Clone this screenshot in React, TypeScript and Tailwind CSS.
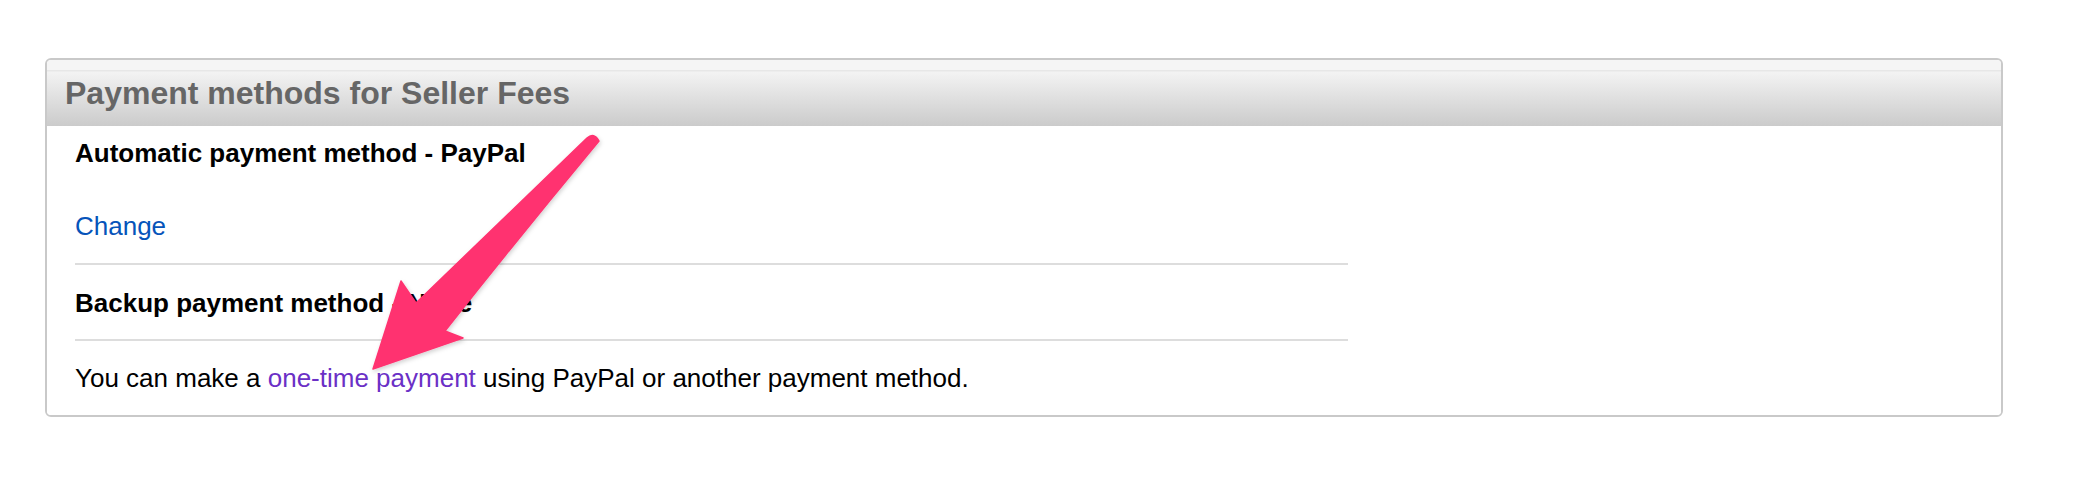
import React from "react";

const Arrow: React.FC = () => (
  <svg
    className="absolute left-0 top-0 pointer-events-none"
    width="2082"
    height="498"
    viewBox="0 0 2082 498"
  >
    <defs>
      <filter id="arrowShadow" x="-10%" y="-10%" width="120%" height="120%">
        <feDropShadow dx="1" dy="2" stdDeviation="2" floodColor="#000" floodOpacity="0.18" />
      </filter>
    </defs>
    <path
      d="M 587 138 Q 594 132 599 141 Q 520 236 445 331 L 463 338 L 373 369 L 401 281 L 416 303 Q 500 222 587 138 Z"
      fill="#ff3370"
      stroke="#ff3370"
      strokeWidth="1.5"
      strokeLinejoin="round"
      filter="url(#arrowShadow)"
    />
  </svg>
);

export default function App() {
  return (
    <div className="relative w-full h-[498px] bg-white pt-[58px] pl-[45px] font-['Liberation_Sans',Arial,sans-serif]">
      <div className="w-[1958px] border-2 border-[#c9c9c9] rounded-[6px] overflow-hidden">
        <div className="h-[66px] flex items-center pl-[18px] bg-[linear-gradient(to_bottom,#f5f5f5_0px,#f5f5f5_10px,#e7e7e7_10px,#e7e7e7_11px,#f3f3f3_12px,#cbcbcb_100%)]">
          <h2 className="text-[32px] leading-[37px] font-bold text-[#666666]">
            Payment methods for Seller Fees
          </h2>
        </div>
        <div className="bg-white px-[28px] pt-[12px] pb-[22px]">
          <div className="w-[1273px]">
            <div className="text-[26px] leading-[30px] font-bold text-black">
              Automatic payment method - PayPal
            </div>
            <div className="mt-[43px] text-[26px] leading-[30px]">
              <a className="text-[#0654ba] cursor-pointer">Change</a>
            </div>
            <div className="mt-[22px] h-[2px] bg-[#dddddd]" />
            <div className="mt-[23px] text-[26px] leading-[30px] font-bold text-black">
              Backup payment method - None
            </div>
            <div className="mt-[21px] h-[2px] bg-[#dddddd]" />
            <p className="mt-[22px] text-[26px] leading-[30px] text-black">
              You can make a <a className="text-[#6b30c6] cursor-pointer">one-time payment</a> using PayPal or another payment method.
            </p>
          </div>
        </div>
      </div>
      <Arrow />
    </div>
  );
}
